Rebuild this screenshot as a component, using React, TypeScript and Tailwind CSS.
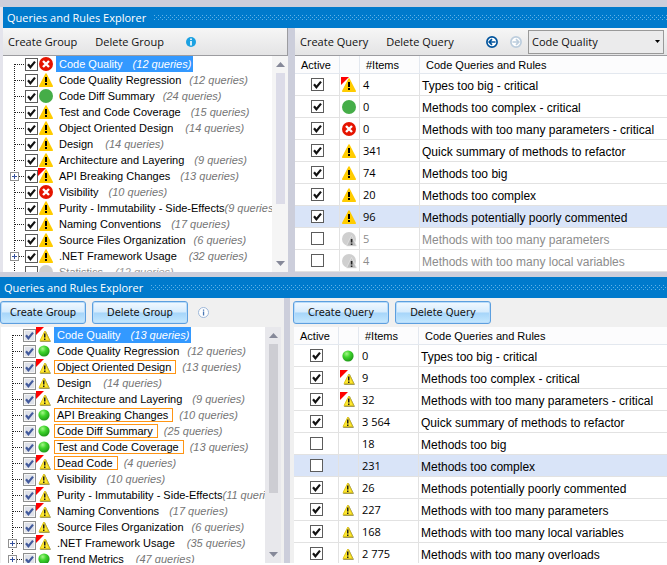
import React from "react";

type Status = "error" | "warning" | "ok" | "muted" | "mutedWarning" | "oldWarning" | "oldOk" | "none";

type Group = {
  name: string;
  count: number;
  status: Status;
  flagged?: boolean;
  expandable?: boolean;
  selected?: boolean;
  changed?: boolean;
  disabled?: boolean;
  gap?: "none" | "small" | "large";
};

type Query = {
  items: string;
  name: string;
  status: Status;
  flagged?: boolean;
  checked?: boolean;
  selected?: boolean;
  disabled?: boolean;
};

const newGroups: Group[] = [
  { name: "Code Quality", count: 12, status: "error", selected: true },
  { name: "Code Quality Regression", count: 12, status: "warning", gap: "small" },
  { name: "Code Diff Summary", count: 24, status: "ok", gap: "small" },
  { name: "Test and Code Coverage", count: 15, status: "warning" },
  { name: "Object Oriented Design", count: 14, status: "warning", gap: "large" },
  { name: "Design", count: 14, status: "warning", gap: "large" },
  { name: "Architecture and Layering", count: 9, status: "warning" },
  { name: "API Breaking Changes", count: 13, status: "warning", flagged: true, expandable: true },
  { name: "Visibility", count: 10, status: "error" },
  { name: "Purity - Immutability - Side-Effects", count: 9, status: "warning", gap: "none" },
  { name: "Naming Conventions", count: 17, status: "warning" },
  { name: "Source Files Organization", count: 6, status: "warning", gap: "small" },
  { name: ".NET Framework Usage", count: 32, status: "warning", expandable: true, gap: "large" },
  { name: "Statistics", count: 12, status: "muted", disabled: true, gap: "large" },
];

const oldGroups: Group[] = [
  { name: "Code Quality", count: 13, status: "oldWarning", flagged: true, selected: true },
  { name: "Code Quality Regression", count: 12, status: "oldOk", gap: "small" },
  { name: "Object Oriented Design", count: 13, status: "oldWarning", flagged: true, changed: true },
  { name: "Design", count: 14, status: "oldWarning", gap: "large" },
  { name: "Architecture and Layering", count: 9, status: "oldWarning", flagged: true },
  { name: "API Breaking Changes", count: 10, status: "oldOk", changed: true },
  { name: "Code Diff Summary", count: 25, status: "oldOk", changed: true },
  { name: "Test and Code Coverage", count: 13, status: "oldOk", changed: true },
  { name: "Dead Code", count: 4, status: "oldWarning", flagged: true, changed: true },
  { name: "Visibility", count: 10, status: "oldWarning" },
  { name: "Purity - Immutability - Side-Effects", count: 11, status: "oldWarning", flagged: true, gap: "none" },
  { name: "Naming Conventions", count: 17, status: "oldWarning", flagged: true },
  { name: "Source Files Organization", count: 6, status: "oldWarning", gap: "small" },
  { name: ".NET Framework Usage", count: 35, status: "oldWarning", flagged: true, expandable: true, gap: "large" },
  { name: "Trend Metrics", count: 47, status: "oldOk", expandable: true, gap: "large" },
];

const newQueries: Query[] = [
  { items: "4", name: "Types too big - critical", status: "warning", flagged: true, checked: true },
  { items: "0", name: "Methods too complex - critical", status: "ok", checked: true },
  { items: "0", name: "Methods with too many parameters - critical", status: "error", checked: true },
  { items: "341", name: "Quick summary of methods to refactor", status: "warning", checked: true },
  { items: "74", name: "Methods too big", status: "warning", checked: true },
  { items: "20", name: "Methods too complex", status: "warning", checked: true },
  { items: "96", name: "Methods potentially poorly commented", status: "warning", checked: true, selected: true },
  { items: "5", name: "Methods with too many parameters", status: "mutedWarning", disabled: true },
  { items: "4", name: "Methods with too many local variables", status: "mutedWarning", disabled: true },
];

const oldQueries: Query[] = [
  { items: "0", name: "Types too big - critical", status: "oldOk", checked: true },
  { items: "9", name: "Methods too complex - critical", status: "oldWarning", flagged: true, checked: true },
  { items: "32", name: "Methods with too many parameters - critical", status: "oldWarning", flagged: true, checked: true },
  { items: "3 564", name: "Quick summary of methods to refactor", status: "oldWarning", checked: true },
  { items: "18", name: "Methods too big", status: "none" },
  { items: "231", name: "Methods too complex", status: "none", selected: true },
  { items: "26", name: "Methods potentially poorly commented", status: "oldWarning", checked: true },
  { items: "227", name: "Methods with too many parameters", status: "oldWarning", checked: true },
  { items: "168", name: "Methods with too many local variables", status: "oldWarning", checked: true },
  { items: "2 775", name: "Methods with too many overloads", status: "oldWarning", checked: true },
];

const uiFont = "font-['Open_Sans','Noto_Sans',sans-serif]";
const listFont = "font-['Liberation_Sans',Arial,sans-serif]";
const buttonFont = "font-['DejaVu_Sans_Condensed',Tahoma,sans-serif]";

function StatusIcon({ status, flagged }: { status: Status; flagged?: boolean }) {
  const shift = flagged && status === "oldWarning" ? "translate(1 1)" : undefined;
  return (
    <svg viewBox="0 0 16 16" className="block size-4 shrink-0" aria-hidden="true">
      {status === "error" && (
        <>
          <circle cx="8" cy="8" r="7" fill="#e51400" />
          <path d="M5 5l6 6M11 5l-6 6" stroke="#fff" strokeWidth="2.4" />
        </>
      )}
      {status === "ok" && <circle cx="8" cy="8" r="7" fill="#45ad48" />}
      {status === "muted" && <circle cx="8" cy="8" r="7" fill="#cfcfcf" />}
      {status === "warning" && (
        <>
          <path d="M8 2L14.2 14.2H1.8z" fill="#ffcc00" stroke="#ffcc00" strokeWidth="1.6" strokeLinejoin="round" />
          <path d="M7 5h2v5H7zM7 11h2v2H7z" fill="#000" />
        </>
      )}
      {status === "mutedWarning" && (
        <>
          <circle cx="8" cy="8" r="7" fill="#cfcfcf" />
          <path d="M10.5 4.5L15.5 15H5.5z" fill="#bcbcbc" stroke="#e8e8e8" strokeWidth="0.7" />
          <path d="M9.8 8h1.6v3.6H9.8zM9.8 12.4h1.6V14H9.8z" fill="#222" />
        </>
      )}
      {status === "oldOk" && (
        <>
          <defs>
            <radialGradient id="ball" cx="0.38" cy="0.3" r="0.7">
              <stop offset="0" stopColor="#a6f58a" />
              <stop offset="0.45" stopColor="#3fd52c" />
              <stop offset="1" stopColor="#1f9a18" />
            </radialGradient>
          </defs>
          <circle cx="8" cy="8" r="5.6" fill="url(#ball)" />
        </>
      )}
      {status === "oldWarning" && (
        <g transform={shift}>
          <path d="M8.6 3.6L13.4 13.4H3.4z" fill="#9a9554" stroke="#9a9554" strokeWidth="1" strokeLinejoin="round" />
          <path d="M7.8 3L12.5 12.6H3z" fill="#ffe92e" stroke="#e0c51a" strokeWidth="0.9" strokeLinejoin="round" />
          <path d="M7 5.6h1.5v4H7zM7 10.4h1.5v1.5H7z" fill="#1c1c1c" />
        </g>
      )}
      {flagged && <path d="M0 0H8L0 8z" fill="#ff0000" />}
    </svg>
  );
}

function Check({ checked, label, old }: { checked?: boolean; label: string; old?: boolean }) {
  return (
    <label className="grid size-[13px] shrink-0">
      <input
        type="checkbox"
        defaultChecked={checked}
        aria-label={label}
        className={`peer m-0 size-[13px] appearance-none border [grid-area:1/1] ${
          old ? "border-[#8e8f8f] bg-[#dfe2ea] shadow-[inset_0_0_0_1px_#f6f6f6]" : "border-[#5c5c5c] bg-white"
        }`}
      />
      <svg
        viewBox="0 0 13 13"
        className="pointer-events-none invisible block size-[13px] [grid-area:1/1] peer-checked:visible"
        aria-hidden="true"
      >
        <path d="M3 6.2L5.4 9.2L10 3.6" fill="none" stroke={old ? "#425a9c" : "#111"} strokeWidth="2.2" />
      </svg>
    </label>
  );
}

function Branch({ first, expandable }: { first: boolean; expandable?: boolean }) {
  return (
    <svg viewBox="0 0 17 16" className="block h-4 w-[17px] shrink-0" shapeRendering="crispEdges" aria-hidden="true">
      <path d={first ? "M6.5 8V16" : "M6.5 0V16"} stroke="#222" strokeDasharray="1 1" />
      <path d="M7 8.5H17" stroke="#222" strokeDasharray="1 1" />
      {expandable && (
        <>
          <rect x="2.5" y="4.5" width="8" height="8" fill="#fff" stroke="#919191" />
          <path d="M4 8.5H9M6.5 6V11" stroke="#34509c" />
        </>
      )}
    </svg>
  );
}

const gaps = { none: "", small: "pl-2", large: "pl-3" };

function GroupRow({ group, first, old }: { group: Group; first: boolean; old?: boolean }) {
  const text = group.selected ? "bg-[#3399ff] text-white" : group.disabled ? "text-[#8c8c8c]" : "text-black";
  const muted = group.selected ? "" : group.disabled ? "text-[#9c9c9c]" : "text-[#757575]";
  return (
    <li className="flex h-4 items-center pl-[5px]">
      <Branch first={first} expandable={group.expandable} />
      <Check checked={!group.disabled} label={group.name} old={old} />
      <StatusIcon status={group.status} flagged={group.flagged} />
      <span className={`ml-0.5 flex h-4 items-center whitespace-nowrap ${text} ${group.selected ? "pr-0.5" : ""}`}>
        <span
          className={
            group.changed
              ? "flex h-[14px] items-center border border-[#ff9514] pr-1 pl-0.5"
              : "flex h-4 items-center pl-[3px]"
          }
        >
          {group.name}
        </span>
        <i className={`${muted} ${group.changed ? "pl-1.5" : group.gap ? gaps[group.gap] : "pl-2.5"}`}>
          ({group.count} queries)
        </i>
      </span>
    </li>
  );
}

function ScrollBar({ old }: { old?: boolean }) {
  return (
    <div className={`flex w-4 shrink-0 flex-col items-center justify-between py-[6px] ${old ? "bg-[#e8e8ec]" : "bg-[#f5f5f5]"}`}>
      <svg viewBox="0 0 9 5" className="block h-[5px] w-[9px]" aria-hidden="true">
        <path d="M0 5L4.5 0L9 5z" fill="#868999" />
      </svg>
      <div className="flex w-full grow flex-col items-center pt-[6px]">
        <div className={old ? "h-[149px] w-[9px] bg-[#cdcdd3]" : "h-[131px] w-[9px] bg-[#dcdce8]"} />
      </div>
      <svg viewBox="0 0 9 5" className="block h-[5px] w-[9px]" aria-hidden="true">
        <path d="M0 0L4.5 5L9 0z" fill="#868999" />
      </svg>
    </div>
  );
}

function GroupTree({ groups, old }: { groups: Group[]; old?: boolean }) {
  return (
    <div className={`flex bg-white ${listFont} text-[11px] leading-4 ${old ? "h-[236px]" : "h-[216px]"}`}>
      <ul className="min-w-0 flex-1 overflow-hidden">
        {groups.map((group, i) => (
          <GroupRow key={group.name} group={group} first={i === 0} old={old} />
        ))}
      </ul>
      <ScrollBar old={old} />
    </div>
  );
}

function QueryTable({ queries, old }: { queries: Query[]; old?: boolean }) {
  return (
    <div className={`overflow-hidden bg-white ${old ? "h-[236px]" : "h-[216px]"}`}>
      <table className={`w-full table-fixed border-separate border-spacing-0 ${listFont} text-xs leading-4 text-black`}>
        <colgroup>
          <col className="w-[45px]" />
          <col className="w-5" />
          <col className="w-[60px]" />
          <col />
        </colgroup>
        <thead>
          <tr className="h-[18px] bg-[#fcfcfd] text-left text-[11px]">
            <th className="border-r border-b border-[#e3e8ef] p-0 pl-1.5 font-normal">Active</th>
            <th className="border-r border-b border-[#e3e8ef] p-0" aria-label="Status" />
            <th className="border-r border-b border-[#e3e8ef] p-0 pl-1.5 font-normal">#Items</th>
            <th className="border-b border-[#e3e8ef] p-0 pl-1.5 font-normal">Code Queries and Rules</th>
          </tr>
        </thead>
        <tbody>
          {queries.map((q) => (
            <tr key={q.name} className={`h-[22px] ${q.selected ? "bg-[#d9e4f8]" : ""} ${q.disabled ? "text-[#8c8c8c]" : ""}`}>
              <td className="border-r border-b border-[#e2e2e2] p-0">
                <div className="flex justify-center">
                  <Check checked={q.checked} label={q.name} />
                </div>
              </td>
              <td className="border-r border-b border-[#e2e2e2] p-0 pl-px">
                <StatusIcon status={q.status} flagged={q.flagged} />
              </td>
              <td className={`border-r border-b border-[#e2e2e2] p-0 pl-[3px] ${uiFont} text-[11px]`}>{q.items}</td>
              <td className="overflow-hidden border-b border-[#e2e2e2] p-0 pt-0.5 pl-0.5 whitespace-nowrap">{q.name}</td>
            </tr>
          ))}
        </tbody>
      </table>
    </div>
  );
}

function TitleBar({ id }: { id: string }) {
  return (
    <header className="flex h-[21px] items-center gap-2 bg-[#007acc] pl-1">
      <h2 className={`${uiFont} shrink-0 text-[11px] leading-4 text-white`}>Queries and Rules Explorer</h2>
      <svg className="block h-[5px] min-w-0 flex-1" shapeRendering="crispEdges" aria-hidden="true">
        <defs>
          <pattern id={id} width="4" height="4" patternUnits="userSpaceOnUse">
            <path d="M0 0h1v1H0zM2 2h1v1H2z" fill="#62b2e8" />
          </pattern>
        </defs>
        <rect width="100%" height="5" fill={`url(#${id})`} />
      </svg>
    </header>
  );
}

function NavIcon({ forward }: { forward?: boolean }) {
  const color = forward ? "#bccddd" : "#00539c";
  return (
    <svg viewBox="0 0 12 12" className="block size-3" fill="none" stroke={color} aria-hidden="true">
      <circle cx="6" cy="6" r="5.1" fill="#fff" strokeWidth="1.7" />
      <path d={forward ? "M2.5 6H8.6M6 3.2L8.8 6L6 8.8" : "M9.5 6H3.4M6 3.2L3.2 6L6 8.8"} strokeWidth="1.7" />
    </svg>
  );
}

function FlatButton({ children }: { children: React.ReactNode }) {
  return <button className="shrink-0 whitespace-nowrap">{children}</button>;
}

function GlossyButton({ children, wide }: { children: React.ReactNode; wide?: boolean }) {
  return (
    <button
      className={`h-[23px] shrink-0 rounded-[3px] border border-[#5c9fdf] bg-[linear-gradient(#f2f9ff,#d5ebfd_48%,#a6d5fa_52%,#c4e8ff)] whitespace-nowrap shadow-[inset_0_0_0_1px_#b9dcfa] ${
        wide ? "w-24" : "w-[86px]"
      }`}
    >
      {children}
    </button>
  );
}

const flatBar = `flex h-7 items-center border-b border-[#9c9ca0] bg-linear-to-b from-[#f6f6f6] to-[#e4e4e5] ${uiFont} text-[11px] leading-4 text-[#111]`;
const glossyBar = `flex h-[29px] items-center gap-1.5 ${buttonFont} text-[11px] leading-4 text-[#111]`;

export default function App() {
  return (
    <main className="bg-[#f5f5f7]">
      <section className="border-t-[7px] border-b-[5px] border-[#cccedb] bg-[#cccedb]">
        <div className="border-l-[3px] border-[#e4e4ec]">
          <TitleBar id="grip-new" />
          <div className="flex">
            <div className="w-[285px] shrink-0">
              <div className={`${flatBar} gap-[18px] border-r pl-[5px]`}>
                <FlatButton>Create Group</FlatButton>
                <FlatButton>Delete Group</FlatButton>
                <button aria-label="Information" className="ml-1 shrink-0">
                  <svg viewBox="0 0 10 10" className="block size-2.5" aria-hidden="true">
                    <circle cx="5" cy="5" r="5" fill="#1ba1e2" />
                    <path d="M4.2 1.6h1.6v1.5H4.2zM4.2 4h1.6v4.4H4.2z" fill="#fff" />
                  </svg>
                </button>
              </div>
              <GroupTree groups={newGroups} />
            </div>
            <div className="ml-[7px] min-w-0 flex-1">
              <div className={`${flatBar} gap-[18px] pr-[3px] pl-[5px]`}>
                <FlatButton>Create Query</FlatButton>
                <FlatButton>Delete Query</FlatButton>
                <div className="ml-auto flex items-center gap-3">
                  <button aria-label="Previous">
                    <NavIcon />
                  </button>
                  <button aria-label="Next">
                    <NavIcon forward />
                  </button>
                </div>
                <label className="-ml-3 grid w-[136px] shrink-0 items-center">
                  <select
                    aria-label="Group"
                    className="h-6 w-full appearance-none border border-[#999] bg-[#ebebec] pl-[3px] [grid-area:1/1]"
                  >
                    <option>Code Quality</option>
                  </select>
                  <svg viewBox="0 0 5 3" className="pointer-events-none mr-1 block h-[3px] w-[5px] justify-self-end [grid-area:1/1]" aria-hidden="true">
                    <path d="M0 0H5L2.5 3z" fill="#000" />
                  </svg>
                </label>
              </div>
              <QueryTable queries={newQueries} />
            </div>
          </div>
        </div>
      </section>

      <section className="bg-[#f0f0f0]">
        <TitleBar id="grip-old" />
        <div className="flex">
          <div className="w-[284px] shrink-0 pr-[3px]">
            <div className={glossyBar}>
              <GlossyButton>Create Group</GlossyButton>
              <GlossyButton wide>Delete Group</GlossyButton>
              <button aria-label="Information" className="ml-1 shrink-0">
                <svg viewBox="0 0 11 11" className="block size-[11px]" aria-hidden="true">
                  <circle cx="5.5" cy="5.5" r="5" fill="#fff" stroke="#9db7d8" />
                  <path d="M4.9 2.4h1.3v1.3H4.9zM4.9 4.6h1.3v4H4.9z" fill="#4a78b5" />
                </svg>
              </button>
            </div>
            <div className="pl-px">
              <GroupTree groups={oldGroups} old />
            </div>
          </div>
          <div className="min-w-0 flex-1 border-l-[6px] border-[#cccedb] pl-[3px]">
            <div className={glossyBar}>
              <GlossyButton wide>Create Query</GlossyButton>
              <GlossyButton wide>Delete Query</GlossyButton>
            </div>
            <div className="pl-px">
              <QueryTable queries={oldQueries} old />
            </div>
          </div>
        </div>
      </section>
    </main>
  );
}
